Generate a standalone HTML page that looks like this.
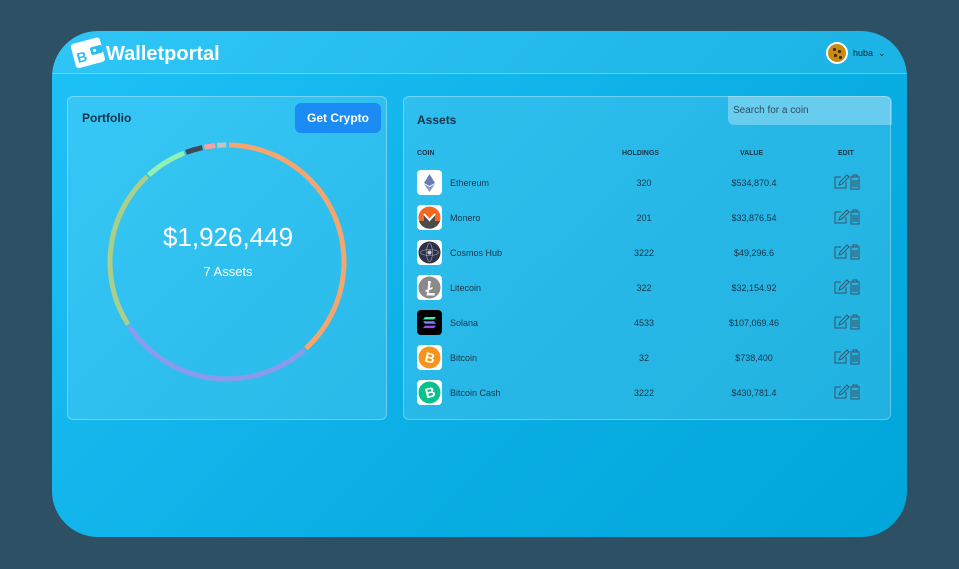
<!DOCTYPE html>
<html><head><meta charset="utf-8"><style>
*{box-sizing:border-box;margin:0;padding:0}
body{width:959px;height:569px;background:#2e5064;font-family:"Liberation Sans",sans-serif;position:relative;overflow:hidden}
.card{position:absolute;left:52px;top:31px;width:855px;height:506px;border-radius:46px;background:linear-gradient(135deg,#1ec2f7 0%,#0aaee4 60%,#00a6da 100%);overflow:hidden}
.hdr{position:absolute;left:0;top:0;width:855px;height:43px;background:rgba(255,255,255,0.08);border-bottom:1px solid rgba(255,255,255,0.3)}
.logo{position:absolute;left:54px;top:12px;color:#fff;font-weight:bold;font-size:20px}
.user{position:absolute;left:774px;top:11px;width:22px;height:22px;border-radius:50%;background:#fff}
.user i{position:absolute;left:2px;top:2px;width:18px;height:18px;border-radius:50%;background:#c98a12}
.user b{position:absolute;width:3px;height:3px;background:#4a2a08;border-radius:1px}
.uname{position:absolute;left:801px;top:17px;font-size:9px;color:#123}
.panel{position:absolute;background:rgba(255,255,255,0.12);border:1px solid rgba(255,255,255,0.3);border-radius:6px}
.t{position:absolute;font-size:12px;font-weight:bold;color:#17324a}
.btn{position:absolute;left:227px;top:6px;width:86px;height:30px;border-radius:6px;background:#1a8cf3;color:#fff;font-weight:bold;font-size:12px;text-align:center;line-height:30px}
.search{position:absolute;left:324px;top:-1px;width:164px;height:29px;background:rgba(255,255,255,0.3);border-radius:0 6px 0 6px;font-size:10px;color:#2f4b5e;padding:9px 5px}
.th{position:absolute;top:53px;font-size:7px;font-weight:bold;color:#1b3447}
.row{position:absolute;left:0;width:488px;height:26px;font-size:9px;color:#1b3447}
.row .ic{position:absolute;left:13px;top:0;width:25px;height:25px;border-radius:4px;background:#fff;overflow:hidden}
.row .n{position:absolute;left:46px;top:8px}
.row .h{position:absolute;left:220px;width:40px;text-align:center;top:8px}
.row .v{position:absolute;left:300px;width:100px;text-align:center;top:8px}
.row svg.e{position:absolute;left:429px;top:4px}
</style></head><body>
<div class="card">
<div class="hdr">
<svg style="position:absolute;left:18px;top:3px" width="38" height="38" viewBox="0 0 38 38"><g transform="rotate(-15 19 19)"><rect x="3" y="6" width="30" height="25" rx="3" fill="#fff"/><rect x="21" y="14" width="12" height="8" rx="2" fill="#28bdf0"/><circle cx="25" cy="18" r="1.6" fill="#fff"/><text x="6" y="26" font-size="14" font-weight="bold" fill="#28bdf0" font-family="Liberation Sans">B</text></g></svg>
<div class="logo">Walletportal</div>
<div class="user"><i></i><b style="left:7px;top:6px"></b><b style="left:12px;top:8px"></b><b style="left:8px;top:12px"></b><b style="left:13px;top:14px"></b></div>
<div class="uname">huba &nbsp;⌄</div>
</div>
<div class="panel" style="left:15px;top:65px;width:320px;height:324px">
<div class="t" style="left:14px;top:14px">Portfolio</div>
<div class="btn">Get Crypto</div>
<svg style="position:absolute;left:0;top:0" width="320" height="324">
<g transform="translate(159,165) rotate(-90)" fill="none" stroke-width="5">
<circle r="117" stroke="#f5a66e" stroke-dasharray="279 1000" stroke-dashoffset="-2"/>
<circle r="117" stroke="#8a9bee" stroke-dasharray="200 1000" stroke-dashoffset="-283"/>
<circle r="117" stroke="#a9cf8a" stroke-dasharray="162 1000" stroke-dashoffset="-485"/>
<circle r="117" stroke="#8ff2b4" stroke-dasharray="42 1000" stroke-dashoffset="-649"/>
<circle r="117" stroke="#3d4a58" stroke-dasharray="17 1000" stroke-dashoffset="-693"/>
<circle r="117" stroke="#f4a4a0" stroke-dasharray="11 1000" stroke-dashoffset="-712"/>
<circle r="117" stroke="#c4c4c4" stroke-dasharray="9 1000" stroke-dashoffset="-725"/>
</g></svg>
<div style="position:absolute;left:0;width:320px;top:125px;text-align:center;color:#fff;font-size:26px">$1,926,449</div>
<div style="position:absolute;left:0;width:320px;top:167px;text-align:center;color:#fff;font-size:13px">7 Assets</div>
</div>
<div class="panel" style="left:351px;top:65px;width:488px;height:324px">
<div class="t" style="left:13px;top:16px">Assets</div>
<div class="search">Search for a coin</div>
<div class="th" style="left:13px">COIN</div>
<div class="th" style="left:218px">HOLDINGS</div>
<div class="th" style="left:336px">VALUE</div>
<div class="th" style="left:434px">EDIT</div>
<div class="row" style="top:73px"><div class="ic"><svg width="25" height="25"><polygon points="12.5,4 18,13 12.5,16 7,13" fill="#6b7bb3"/><polygon points="12.5,17 18,14 12.5,22 7,14" fill="#8a97c8"/></svg></div><div class="n">Ethereum</div><div class="h">320</div><div class="v">$534,870.4</div><svg class="e" width="30" height="16"><path d="M2 3h6M2 3v11h11V8M6 11l1-3 7-7 2 2-7 7z" fill="none" stroke="#3a5264" stroke-width="1"/><path d="M17 3h10M20 3V1h4v2M18 4v11h8V4M20 6v7M22 6v7M24 6v7" fill="none" stroke="#3a5264" stroke-width="1"/></svg></div>
<div class="row" style="top:108px"><div class="ic"><svg width="25" height="25"><circle cx="12.5" cy="12.5" r="11" fill="#f26822"/><path d="M2 16h5V9l5.5 6 5.5-6v7h5a11 11 0 0 1-21 0z" fill="#4c4c4c"/><path d="M7 9l5.5 6 5.5-6" fill="none" stroke="#fff" stroke-width="2"/></svg></div><div class="n">Monero</div><div class="h">201</div><div class="v">$33,876.54</div><svg class="e" width="30" height="16"><path d="M2 3h6M2 3v11h11V8M6 11l1-3 7-7 2 2-7 7z" fill="none" stroke="#3a5264" stroke-width="1"/><path d="M17 3h10M20 3V1h4v2M18 4v11h8V4M20 6v7M22 6v7M24 6v7" fill="none" stroke="#3a5264" stroke-width="1"/></svg></div>
<div class="row" style="top:143px"><div class="ic"><svg width="25" height="25"><circle cx="12.5" cy="12.5" r="11" fill="#2e3148"/><ellipse cx="12.5" cy="12.5" rx="9" ry="3" fill="none" stroke="#aab" stroke-width=".6"/><ellipse cx="12.5" cy="12.5" rx="3" ry="9" fill="none" stroke="#aab" stroke-width=".6"/><circle cx="12.5" cy="12.5" r="2" fill="#ccd"/></svg></div><div class="n">Cosmos Hub</div><div class="h">3222</div><div class="v">$49,296.6</div><svg class="e" width="30" height="16"><path d="M2 3h6M2 3v11h11V8M6 11l1-3 7-7 2 2-7 7z" fill="none" stroke="#3a5264" stroke-width="1"/><path d="M17 3h10M20 3V1h4v2M18 4v11h8V4M20 6v7M22 6v7M24 6v7" fill="none" stroke="#3a5264" stroke-width="1"/></svg></div>
<div class="row" style="top:178px"><div class="ic"><svg width="25" height="25"><circle cx="12.5" cy="12.5" r="11" fill="#8a8a8a"/><path d="M11 6h3l-1.2 7 3-1-.5 2-3 1-.6 3h6v2.5H9.5l.8-4.2-2 .7.5-2 2-.7z" fill="#fff"/></svg></div><div class="n">Litecoin</div><div class="h">322</div><div class="v">$32,154.92</div><svg class="e" width="30" height="16"><path d="M2 3h6M2 3v11h11V8M6 11l1-3 7-7 2 2-7 7z" fill="none" stroke="#3a5264" stroke-width="1"/><path d="M17 3h10M20 3V1h4v2M18 4v11h8V4M20 6v7M22 6v7M24 6v7" fill="none" stroke="#3a5264" stroke-width="1"/></svg></div>
<div class="row" style="top:213px"><div class="ic" style="background:#000"><svg width="25" height="25"><path d="M8 7h11l-2 2.5H6z" fill="#3ee6b0"/><path d="M6 11.3h11l2 2.5H8z" fill="#6c8df0"/><path d="M8 15.6h11l-2 2.5H6z" fill="#9a4ef0"/></svg></div><div class="n">Solana</div><div class="h">4533</div><div class="v">$107,069.46</div><svg class="e" width="30" height="16"><path d="M2 3h6M2 3v11h11V8M6 11l1-3 7-7 2 2-7 7z" fill="none" stroke="#3a5264" stroke-width="1"/><path d="M17 3h10M20 3V1h4v2M18 4v11h8V4M20 6v7M22 6v7M24 6v7" fill="none" stroke="#3a5264" stroke-width="1"/></svg></div>
<div class="row" style="top:248px"><div class="ic"><svg width="25" height="25"><circle cx="12.5" cy="12.5" r="11" fill="#f7931a"/><text x="8" y="17.5" font-size="14" font-weight="bold" fill="#fff" font-family="Liberation Sans" transform="rotate(12 12.5 12.5)">B</text></svg></div><div class="n">Bitcoin</div><div class="h">32</div><div class="v">$738,400</div><svg class="e" width="30" height="16"><path d="M2 3h6M2 3v11h11V8M6 11l1-3 7-7 2 2-7 7z" fill="none" stroke="#3a5264" stroke-width="1"/><path d="M17 3h10M20 3V1h4v2M18 4v11h8V4M20 6v7M22 6v7M24 6v7" fill="none" stroke="#3a5264" stroke-width="1"/></svg></div>
<div class="row" style="top:283px"><div class="ic"><svg width="25" height="25"><circle cx="12.5" cy="12.5" r="11" fill="#0ac18e"/><text x="8" y="17.5" font-size="14" font-weight="bold" fill="#fff" font-family="Liberation Sans" transform="rotate(-15 12.5 12.5)">B</text></svg></div><div class="n">Bitcoin Cash</div><div class="h">3222</div><div class="v">$430,781.4</div><svg class="e" width="30" height="16"><path d="M2 3h6M2 3v11h11V8M6 11l1-3 7-7 2 2-7 7z" fill="none" stroke="#3a5264" stroke-width="1"/><path d="M17 3h10M20 3V1h4v2M18 4v11h8V4M20 6v7M22 6v7M24 6v7" fill="none" stroke="#3a5264" stroke-width="1"/></svg></div>
</div>
</div>
</body></html>
